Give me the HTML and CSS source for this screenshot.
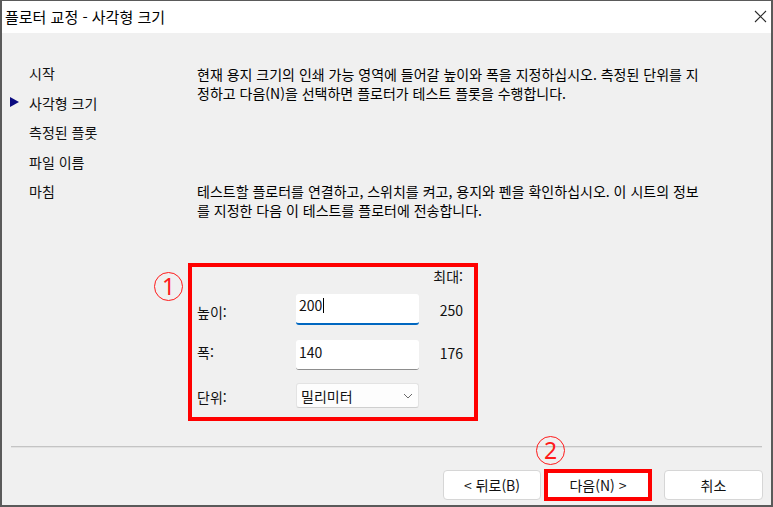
FILE: index.html
```html
<!DOCTYPE html>
<html lang="ko">
<head>
<meta charset="utf-8">
<title>플로터 교정 - 사각형 크기</title>
<link rel="stylesheet" href="styles.css">
</head>
<body>
<div class="window">
  <header class="titlebar">
    <span class="title">플로터 교정 - 사각형 크기</span>
    <svg class="close" width="13" height="13" viewBox="0 0 13 13" aria-label="닫기">
      <path d="M1 1L12 12M12 1L1 12" stroke="#2a2a2a" stroke-width="1.1" fill="none"/>
    </svg>
  </header>
  <div class="main">
    <nav class="steps">
      <div class="step"><span class="marker"></span><span>시작</span></div>
      <div class="step current"><span class="marker"><svg width="9" height="10" viewBox="0 0 9 10"><path d="M0 0L9 5L0 10Z" fill="#0b0b80"/></svg></span><span>사각형 크기</span></div>
      <div class="step"><span class="marker"></span><span>측정된 플롯</span></div>
      <div class="step"><span class="marker"></span><span>파일 이름</span></div>
      <div class="step"><span class="marker"></span><span>마침</span></div>
    </nav>
    <section class="content">
      <p class="desc">현재 용지 크기의 인쇄 가능 영역에 들어갈 높이와 폭을 지정하십시오. 측정된 단위를 지<br>정하고 다음(N)을 선택하면 플로터가 테스트 플롯을 수행합니다.</p>
      <p class="desc second">테스트할 플로터를 연결하고, 스위치를 켜고, 용지와 펜을 확인하십시오. 이 시트의 정보<br>를 지정한 다음 이 테스트를 플로터에 전송합니다.</p>
      <div class="sizebox">
        <span class="badge badge-one">1</span>
        <div class="row head"><span></span><span></span><span class="val">최대:</span></div>
        <div class="row r1"><span class="lbl">높이:</span><div class="field focused">200<span class="caret"></span></div><span class="val">250</span></div>
        <div class="row r2"><span class="lbl">폭:</span><div class="field">140</div><span class="val">176</span></div>
        <div class="row r3"><span class="lbl">단위:</span><div class="select"><span>밀리미터</span><svg width="10" height="6" viewBox="0 0 10 6"><path d="M1 1L5 5L9 1" stroke="#6a6a6a" stroke-width="1" fill="none"/></svg></div><span class="val"></span></div>
      </div>
    </section>
  </div>
  <div class="separator"></div>
  <footer class="buttons">
    <button class="btn back">&lt; 뒤로(B)</button>
    <button class="btn next"><span class="badge badge-two">2</span>다음(N) &gt;</button>
    <button class="btn cancel">취소</button>
  </footer>
</div>
</body>
</html>
```
FILE: styles.css
```css
* { box-sizing: border-box; }
html, body { margin: 0; padding: 0; }
body {
  width: 773px;
  height: 507px;
  overflow: hidden;
  font-family: "Noto Sans CJK KR", "Noto Sans", sans-serif;
  font-size: 14px;
  color: #000;
  background: #f0f0f0;
}
.window {
  width: 773px;
  height: 507px;
  border: 2px solid #5a5a5a;
  border-top-width: 1px;
  display: flex;
  flex-direction: column;
  background: #f0f0f0;
}
.titlebar {
  height: 32px;
  flex: none;
  background: #fff;
  display: flex;
  align-items: center;
  justify-content: space-between;
  padding: 0 4px 0 3px;
}
.title { font-size: 15px; line-height: 18px; color: #000; }
.close { margin-top: -1px; }
.main {
  flex: 1;
  display: flex;
}
.steps {
  width: 186px;
  flex: none;
  padding: 26px 0 0 8px;
}
.step {
  display: flex;
  height: 29.5px;
  line-height: 29.5px;
  color: #111;
}
.marker {
  width: 19px;
  flex: none;
  display: flex;
  align-items: flex-start;
  padding-top: 8px;
}
.content {
  flex: 1;
  padding-top: 32px;
}
.desc {
  margin: 0;
  padding-left: 9px;
  line-height: 19px;
  color: #000;
  white-space: nowrap;
}
.desc.second { margin-top: 79px; }
.sizebox {
  position: relative;
  margin-top: 43px;
  width: 290px;
  height: 158px;
  border: 4px solid #ff0000;
  padding: 0 11px 9px 5px;
}
.row {
  display: grid;
  grid-template-columns: 99px 123px 1fr;
  align-items: center;
}
.row.head { height: 18px; line-height: 18px; }
.row.r1 { margin-top: 9px; height: 31px; }
.row.r2 { margin-top: 15px; height: 30px; }
.row.r3 { margin-top: 13px; height: 25px; }
.lbl { line-height: 18px; color: #111; }
.val { text-align: right; line-height: 18px; color: #111; }
.r1 .lbl { padding-top: 5px; }
.r1 .val { padding-top: 1px; }
.r2 .lbl { padding-bottom: 6px; }
.r2 .val { padding-bottom: 4px; }
.r3 .lbl { padding-top: 2px; }
.field {
  height: 100%;
  background: #fff;
  border-radius: 3px;
  border-bottom: 1px solid #8d8d8d;
  padding: 3px 0 0 3px;
  line-height: 18px;
  color: #111;
  display: flex;
  align-items: flex-start;
}
.field.focused {
  border-bottom: 2px solid #0067c0;
  padding-top: 2px;
}
.caret {
  display: inline-block;
  width: 1px;
  height: 15px;
  margin: 2px 0 0 1px;
  background: #000;
}
.select {
  height: 100%;
  background: #fdfdfd;
  border: 1px solid #e3e3e3;
  border-bottom-color: #cfcfcf;
  border-radius: 3px;
  display: flex;
  align-items: center;
  justify-content: space-between;
  padding: 0 5px 0 4px;
  color: #111;
}
.badge {
  position: absolute;
  width: 29px;
  height: 29px;
  border: 1.5px solid #ff1a1a;
  border-radius: 50%;
  color: #ff1a1a;
  font-family: "Noto Sans", sans-serif;
  font-size: 23px;
  line-height: 26px;
  text-align: center;
  font-weight: 400;
}
.badge-one { left: -38px; top: 5px; }
.badge-two { left: -12px; top: -37px; }
.separator {
  flex: none;
  height: 2px;
  margin: 0 9px;
  border-top: 1px solid #c4c4c4;
  border-bottom: 1px solid #e2e2e2;
}
.buttons {
  flex: none;
  height: 32px;
  margin: 21px 0 4px;
  display: flex;
  justify-content: flex-end;
  align-items: center;
  padding-right: 8px;
}
.btn {
  font-family: inherit;
  font-size: 14px;
  color: #111;
  background: #fff;
  border: 1px solid #d6d6d6;
  border-radius: 4px;
  height: 30px;
  padding: 0;
  line-height: 18px;
}
.back { width: 98px; margin-right: 3px; }
.next {
  position: relative;
  width: 108px;
  height: 32px;
  border: 4px solid #ff0000;
  border-radius: 0;
  margin-right: 12px;
}
.cancel { width: 99px; }
```
